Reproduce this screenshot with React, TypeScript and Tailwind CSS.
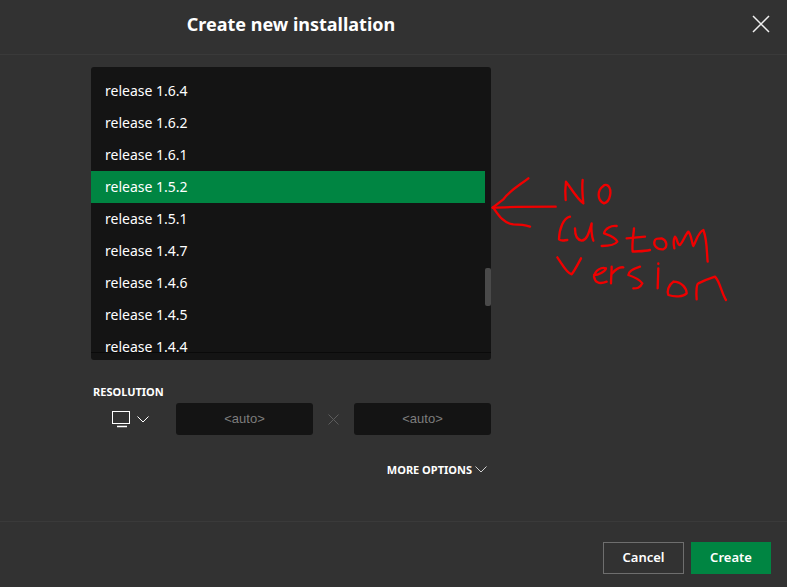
const versions = [
  "release 1.6.4",
  "release 1.6.2",
  "release 1.6.1",
  "release 1.5.2",
  "release 1.5.1",
  "release 1.4.7",
  "release 1.4.6",
  "release 1.4.5",
  "release 1.4.4",
];

// Red hand-drawn note next to the list
function Scribble() {
  return (
    <svg
      className="absolute left-[480px] top-[160px]"
      width="260"
      height="150"
      viewBox="0 0 780 450"
      fill="none"
      stroke="#f00000"
      strokeWidth="7"
      strokeLinecap="round"
      strokeLinejoin="round"
    >
      <path d="M145 55C120 75 90 90 70 118L38 143" />
      <path d="M38 143C90 140 160 140 227 140" />
      <path d="M40 143C55 165 70 190 100 193C115 193 135 195 150 200" />
      <path d="M257 120C255 100 256 80 258 65C270 80 290 115 310 130C308 110 305 85 308 60" />
      <path d="M370 78C352 90 350 120 372 130C392 125 396 90 385 78C378 72 372 75 370 78" />
      <path d="M270 170C250 175 238 205 237 238C245 245 255 240 262 240" />
      <path d="M285 205C285 225 290 240 305 242C320 240 325 225 335 190C333 205 335 230 340 242" />
      <path d="M410 198C395 195 375 205 372 220C385 225 405 230 412 245C405 255 385 258 365 258" />
      <path d="M462 205C460 230 455 255 458 275C470 273 490 275 510 270" />
      <path d="M440 235L495 230" />
      <path d="M525 240C518 255 530 270 550 268C565 260 560 240 545 235C535 235 528 235 525 240" />
      <path d="M583 265C580 250 582 235 585 230C595 240 590 255 600 255C610 245 615 225 625 215C635 225 635 250 640 258C650 240 655 215 670 210C682 240 680 280 683 305" />
      <path d="M232 292C245 310 260 340 275 343C285 330 295 310 303 295" />
      <path d="M342 345C355 345 375 335 378 325C365 320 345 330 342 350C345 365 355 375 380 365" />
      <path d="M395 320C395 335 393 355 393 370" />
      <path d="M397 340C405 330 415 320 430 322" />
      <path d="M480 320C465 325 445 335 445 345C460 350 480 360 487 370C480 385 470 385 460 385" />
      <path d="M535 325L533 385" />
      <path d="M535 310L535 312" />
      <path d="M580 365C565 375 560 395 565 405C585 412 610 410 620 400C620 385 605 365 580 365" />
      <path d="M650 418C648 395 650 370 655 370C665 365 690 355 705 350C720 365 725 400 738 420" />
    </svg>
  );
}

function Chevron({ className }: { className: string }) {
  return (
    <svg className={className} width="12" height="7" viewBox="0 0 12 7" fill="none" stroke="currentColor" strokeWidth="1">
      <path d="M0.5 0.5L6 6L11.5 0.5" />
    </svg>
  );
}

export default function App() {
  return (
    <div className="relative flex h-[587px] w-[787px] flex-col overflow-hidden bg-[#323232] font-['Noto_Sans',sans-serif] text-white">
      {/* Header */}
      <div className="flex h-[55px] shrink-0 items-center border-b border-[#3a3a3a] pb-[6px] pl-[91px] pr-[17px]">
        <h1 className="w-[400px] text-center text-[18px] font-bold">Create new installation</h1>
        <button className="ml-auto text-[#f0f0f0]">
          <svg width="18" height="18" viewBox="0 0 18 18" fill="none" stroke="currentColor" strokeWidth="1.5" className="block">
            <path d="M1 1L17 17M17 1L1 17" />
          </svg>
        </button>
      </div>

      {/* Body */}
      <div className="flex-1 pl-[91px] pt-[12px]">
        <div className="relative h-[293px] w-[400px] overflow-hidden rounded-[3px] bg-[#141414] pb-[7px] pt-[8px]">
          <div className="h-[278px] overflow-hidden border-b border-[#0a0a0a]">
            {versions.map((v) => (
              <div
                key={v}
                className={`flex h-[32px] w-[394px] items-center pb-[2px] pl-[14px] text-[14px] ${
                  v === "release 1.5.2" ? "bg-[#008542]" : ""
                }`}
              >
                {v}
              </div>
            ))}
          </div>
          <div className="absolute right-0 top-[201px] h-[38px] w-[6px] rounded-[2px] bg-[#4a4a4a]" />
        </div>

        <div className="w-[400px]">
          <div className="mt-[25px] pl-[2px] text-[11px] font-bold leading-[13px]">RESOLUTION</div>
          <div className="mt-[5px] flex items-center">
            <div className="flex w-[85px] items-center pl-[21px]">
              <svg width="19" height="17" viewBox="0 0 19 17" fill="none" stroke="white" className="block">
                <rect x="0.5" y="0.5" width="17" height="12" />
                <path d="M5 15.5H15" strokeWidth="1.5" />
              </svg>
              <Chevron className="ml-[6px] text-white" />
            </div>
            <div className="flex h-[32px] w-[137px] items-center justify-center rounded-[3px] bg-[#141414] font-['Liberation_Sans',sans-serif] text-[13px] text-[#7d7d7d]">
              &lt;auto&gt;
            </div>
            <div className="flex w-[41px] justify-center text-[#5c5c5c]">
              <svg width="11" height="11" viewBox="0 0 11 11" fill="none" stroke="currentColor" className="block">
                <path d="M0.5 0.5L10.5 10.5M10.5 0.5L0.5 10.5" />
              </svg>
            </div>
            <div className="flex h-[32px] w-[137px] items-center justify-center rounded-[3px] bg-[#141414] font-['Liberation_Sans',sans-serif] text-[13px] text-[#7d7d7d]">
              &lt;auto&gt;
            </div>
          </div>
          <div className="mt-[27px] flex items-center justify-end pr-[4px] text-[11px] font-bold leading-[15px]">
            MORE OPTIONS
            <Chevron className="ml-[3px] text-[#d0d0d0]" />
          </div>
        </div>
      </div>

      {/* Footer */}
      <div className="flex h-[66px] shrink-0 items-start justify-end gap-[7px] border-t border-[#3a3a3a] pr-[16px] pt-[20px]">
        <button className="h-[32px] w-[81px] border border-[#6e6e6e] text-[13px] font-semibold">Cancel</button>
        <button className="h-[32px] w-[80px] bg-[#008542] text-[13px] font-semibold">Create</button>
      </div>

      <Scribble />
    </div>
  );
}
